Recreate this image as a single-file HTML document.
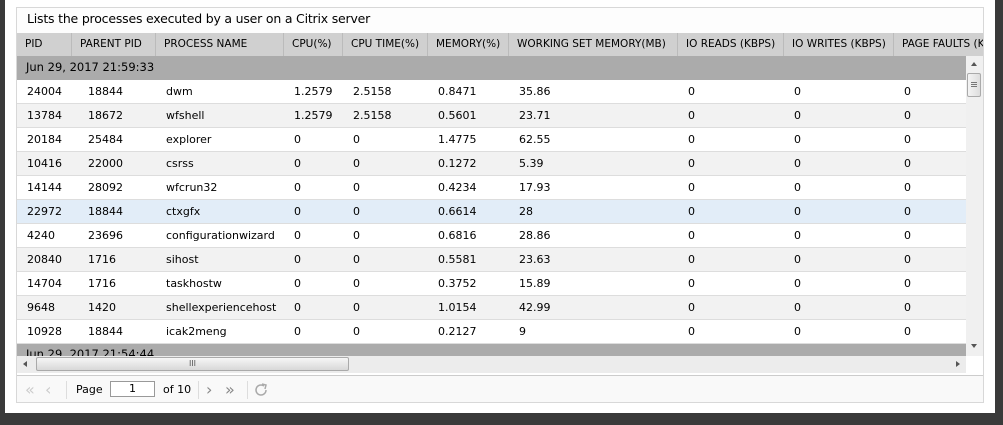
<!DOCTYPE html><html><head><style>
*{margin:0;padding:0;box-sizing:border-box}
body{width:1003px;height:425px;background:#3a3a3a;position:relative;overflow:hidden;font-family:"DejaVu Sans","Liberation Sans",sans-serif;font-size:11px;color:#000}
#panel{position:absolute;left:5px;top:0;width:990px;height:413px;background:#fff}
#box{position:absolute;left:16px;top:7px;width:968px;height:396px;border:1px solid #d8d8d8;background:#fff;overflow:hidden}
.title{position:absolute;left:0;top:0;height:25px;width:100%;background:#fdfdfd;font-size:12.5px;line-height:22px;padding-left:10px;font-family:"DejaVu Sans",sans-serif;letter-spacing:-0.2px}
.hdr{position:absolute;left:0;top:25px;height:23px;width:968px;background:#d0d0d0}
.hdr span{position:absolute;top:0;height:23px;line-height:23px;border-right:1px solid #bbb;padding-left:8px;font-size:10.5px;white-space:nowrap}
.grp{position:absolute;left:0;width:949px;background:#ababab;font-size:11.5px;padding-left:9px;line-height:22px}
.row{position:absolute;left:0;width:949px;height:24px;border-bottom:1px solid #ddd}
.row span{position:absolute;top:0;line-height:24px;white-space:nowrap}
.vs{position:absolute;left:949px;top:48px;width:17px;height:300px;background:#f0f0f0}
.hs{position:absolute;left:0;top:348px;width:949px;height:17px;background:#ececec}
.foot{position:absolute;left:0;top:367px;width:968px;height:29px;background:#f9f9f9;border-top:1px solid #ccc}
</style></head><body>
<div id="panel"></div>
<div id="box">
<div class="title">Lists the processes executed by a user on a Citrix server</div>
<div class="hdr">
<span style="left:0;width:55px">PID</span>
<span style="left:55px;width:84px">PARENT PID</span>
<span style="left:139px;width:128px">PROCESS NAME</span>
<span style="left:267px;width:59px">CPU(%)</span>
<span style="left:326px;width:85px">CPU TIME(%)</span>
<span style="left:411px;width:81px">MEMORY(%)</span>
<span style="left:492px;width:169px">WORKING SET MEMORY(MB)</span>
<span style="left:661px;width:106px">IO READS (KBPS)</span>
<span style="left:767px;width:110px">IO WRITES (KBPS)</span>
<span style="left:877px;width:120px">PAGE FAULTS (KBPS)</span>
</div>
<div class="grp" style="top:48px;height:24px">Jun 29, 2017 21:59:33</div>
<div id="rows"></div>
<div class="grp" style="top:336px;height:12px;line-height:20px;overflow:hidden">Jun 29, 2017 21:54:44</div>
<div class="vs">
<div style="position:absolute;left:5px;top:6px;border:3px solid transparent;border-bottom:4px solid #555;border-top:0"></div>
<div style="position:absolute;left:1px;top:17px;width:14px;height:24px;border:1px solid #aaa;border-radius:2px;background:linear-gradient(90deg,#f4f4f4,#ddd)"><div style="position:absolute;left:3px;top:8px;width:6px;height:5px;border-top:1px solid #777;border-bottom:1px solid #777"></div><div style="position:absolute;left:3px;top:10px;width:6px;border-top:1px solid #777"></div></div>
<div style="position:absolute;left:5px;top:288px;border:3px solid transparent;border-top:4px solid #555;border-bottom:0"></div>
</div>
<div class="hs">
<div style="position:absolute;left:6px;top:5px;border:3px solid transparent;border-right:4px solid #555;border-left:0"></div>
<div style="position:absolute;left:19px;top:1px;width:313px;height:14px;border:1px solid #aaa;border-radius:2px;background:linear-gradient(#f6f6f6,#d8d8d8);text-align:center;font-size:8px;line-height:12px;color:#555">III</div>
<div style="position:absolute;left:939px;top:5px;border:3px solid transparent;border-left:4px solid #555;border-right:0"></div>
</div>
<div class="foot">
<span style="position:absolute;left:8px;top:4px;font-size:16px;color:#ccc">«</span>
<span style="position:absolute;left:28px;top:4px;font-size:16px;color:#ccc">‹</span>
<div style="position:absolute;left:49px;top:5px;height:18px;border-left:1px solid #ddd"></div>
<span style="position:absolute;left:59px;top:7px">Page</span>
<div style="position:absolute;left:93px;top:5px;width:45px;height:16px;border:1px solid #999;background:#fff;text-align:center;line-height:14px">1</div>
<span style="position:absolute;left:146px;top:7px">of 10</span>
<div style="position:absolute;left:181px;top:5px;height:18px;border-left:1px solid #ddd"></div>
<span style="position:absolute;left:189px;top:4px;font-size:16px;color:#888">›</span>
<span style="position:absolute;left:208px;top:4px;font-size:16px;color:#888">»</span>
<div style="position:absolute;left:230px;top:5px;height:18px;border-left:1px solid #ddd"></div>
<svg style="position:absolute;left:236px;top:6px" width="16" height="16" viewBox="0 0 16 16"><path d="M13 8A5 5 0 1 1 11 4" fill="none" stroke="#aaa" stroke-width="1.5"/><path d="M9 2L13 3L12 7" fill="none" stroke="#aaa" stroke-width="1.5"/></svg>
</div>
</div>
<script>
var d=[["24004","18844","dwm","1.2579","2.5158","0.8471","35.86"],["13784","18672","wfshell","1.2579","2.5158","0.5601","23.71"],["20184","25484","explorer","0","0","1.4775","62.55"],["10416","22000","csrss","0","0","0.1272","5.39"],["14144","28092","wfcrun32","0","0","0.4234","17.93"],["22972","18844","ctxgfx","0","0","0.6614","28"],["4240","23696","configurationwizard","0","0","0.6816","28.86"],["20840","1716","sihost","0","0","0.5581","23.63"],["14704","1716","taskhostw","0","0","0.3752","15.89"],["9648","1420","shellexperiencehost","0","0","1.0154","42.99"],["10928","18844","icak2meng","0","0","0.2127","9"]];
var x=[10,71,149,277,336,421,502,671,777,887],h="";
d.forEach(function(r,i){var bg=i==5?"#e2edf8":(i%2?"#f2f2f2":"#fff");h+='<div class="row" style="top:'+(72+i*24)+'px;background:'+bg+'">';r.concat(["0","0","0"]).forEach(function(v,j){h+='<span style="left:'+x[j]+'px">'+v+'</span>'});h+='</div>'});
document.getElementById("rows").innerHTML=h;
</script>
</body></html>
